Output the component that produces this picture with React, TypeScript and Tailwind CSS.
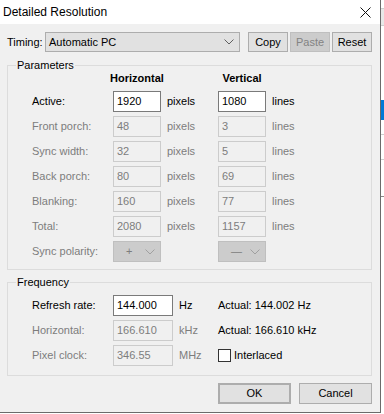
import React from "react";

const font = { fontFamily: '"Liberation Sans", Arial, sans-serif' };

const Chevron: React.FC<{ color?: string }> = ({ color = "#606060" }) => (
  <svg width="10" height="6" viewBox="0 0 10 6" className="shrink-0">
    <path d="M0.5 0.5 L5 5 L9.5 0.5" fill="none" stroke={color} strokeWidth="1" />
  </svg>
);

type Row = { label: string; h: string; v: string; enabled?: boolean };

const rows: Row[] = [
  { label: "Active:", h: "1920", v: "1080", enabled: true },
  { label: "Front porch:", h: "48", v: "3" },
  { label: "Sync width:", h: "32", v: "5" },
  { label: "Back porch:", h: "80", v: "69" },
  { label: "Blanking:", h: "160", v: "77" },
  { label: "Total:", h: "2080", v: "1157" },
];

const Field: React.FC<{ value: string; enabled?: boolean; w: string }> = ({
  value,
  enabled,
  w,
}) => (
  <div
    className={`${w} h-[21px] shrink-0 flex items-center pl-[3px] border ${
      enabled
        ? "bg-white border-[#7a7a7a] text-black"
        : "bg-[#f0f0f0] border-[#cccccc] text-[#7d7d7d]"
    }`}
  >
    {value}
  </div>
);

const PolarityBox: React.FC<{ sign: string }> = ({ sign }) => (
  <div className="w-[48px] h-[21px] shrink-0 flex items-center justify-between pl-[12px] pr-[5px] bg-[#cccccc] border border-[#bfbfbf] text-[#7d7d7d]">
    <span>{sign}</span>
    <Chevron color="#a0a0a0" />
  </div>
);

const Button: React.FC<{
  children: React.ReactNode;
  className?: string;
  disabled?: boolean;
}> = ({ children, className = "", disabled }) => (
  <div
    className={`flex items-center justify-center border ${
      disabled
        ? "bg-[#cccccc] border-[#bfbfbf] text-[#838383]"
        : "bg-[#e1e1e1] border-[#adadad] text-black"
    } ${className}`}
  >
    {children}
  </div>
);

export default function App() {
  return (
    <div className="w-[384px] h-[414px] bg-white flex items-start overflow-hidden" style={font}>
      <div className="w-[381px] h-[413px] shrink-0 bg-[#f0f0f0] border-r border-b border-[#6b6b6b] flex flex-col text-[11px] leading-[13px] text-black">
        {/* title bar */}
        <div className="h-[24px] bg-white flex items-center justify-between pl-[3px] pr-[9px]">
          <span className="text-[12px] text-black">Detailed Resolution</span>
          <svg width="11" height="11" viewBox="0 0 11 11">
            <path d="M0.5 0.5 L10.5 10.5 M10.5 0.5 L0.5 10.5" stroke="#111" strokeWidth="1" />
          </svg>
        </div>

        <div className="flex flex-col pl-[7px] pr-[8px]">
          {/* timing row */}
          <div className="flex items-center mt-[8px] h-[20px]">
            <span className="w-[38px] shrink-0">Timing:</span>
            <div className="w-[195px] h-[20px] flex items-center justify-between pl-[3px] pr-[5px] bg-[#e1e1e1] border border-[#adadad]">
              <span>Automatic PC</span>
              <Chevron />
            </div>
            <Button className="w-[40px] h-[20px] ml-[8px]">Copy</Button>
            <Button className="w-[40px] h-[20px] ml-[2px]" disabled>
              Paste
            </Button>
            <Button className="w-[40px] h-[20px] ml-[2px]">Reset</Button>
          </div>

          {/* parameters */}
          <fieldset className="mt-[7px] border border-[#dcdcdc] pb-[7px]">
            <legend className="ml-[8px] px-[1px]">Parameters</legend>
            <div className="pl-[24px]">
              <div className="flex font-bold">
                <div className="w-[81px] shrink-0" />
                <div className="w-[48px] shrink-0 flex justify-center whitespace-nowrap">Horizontal</div>
                <div className="w-[57px] shrink-0" />
                <div className="w-[48px] shrink-0 flex justify-center whitespace-nowrap">Vertical</div>
              </div>
              <div className="flex flex-col gap-[4px] mt-[6px]">
                {rows.map((r) => (
                  <div key={r.label} className="flex items-center">
                    <span className={`w-[81px] shrink-0 ${r.enabled ? "text-black" : "text-[#7d7d7d]"}`}>
                      {r.label}
                    </span>
                    <Field value={r.h} enabled={r.enabled} w="w-[48px]" />
                    <span className={`w-[51px] ml-[6px] shrink-0 ${r.enabled ? "text-black" : "text-[#7d7d7d]"}`}>
                      pixels
                    </span>
                    <Field value={r.v} enabled={r.enabled} w="w-[48px]" />
                    <span className={`ml-[6px] ${r.enabled ? "text-black" : "text-[#7d7d7d]"}`}>lines</span>
                  </div>
                ))}
                <div className="flex items-center">
                  <span className="w-[81px] shrink-0 text-[#7d7d7d]">Sync polarity:</span>
                  <PolarityBox sign="+" />
                  <div className="w-[57px] shrink-0" />
                  <PolarityBox sign="—" />
                </div>
              </div>
            </div>
          </fieldset>

          {/* frequency */}
          <fieldset className="mt-[6px] border border-[#dcdcdc] pt-[6px] pb-[9px]">
            <legend className="ml-[8px] px-[1px]">Frequency</legend>
            <div className="flex flex-col gap-[4px] pl-[24px]">
              <div className="flex items-center">
                <span className="w-[81px] shrink-0">Refresh rate:</span>
                <Field value="144.000" enabled w="w-[60px]" />
                <span className="w-[39px] ml-[6px] shrink-0">Hz</span>
                <span>Actual: 144.002 Hz</span>
              </div>
              <div className="flex items-center">
                <span className="w-[81px] shrink-0 text-[#7d7d7d]">Horizontal:</span>
                <Field value="166.610" w="w-[60px]" />
                <span className="w-[39px] ml-[6px] shrink-0 text-[#7d7d7d]">kHz</span>
                <span>Actual: 166.610 kHz</span>
              </div>
              <div className="flex items-center">
                <span className="w-[81px] shrink-0 text-[#7d7d7d]">Pixel clock:</span>
                <Field value="346.55" w="w-[60px]" />
                <span className="w-[39px] ml-[6px] shrink-0 text-[#7d7d7d]">MHz</span>
                <div className="w-[13px] h-[13px] bg-white border border-[#333333] shrink-0" />
                <span className="ml-[3px]">Interlaced</span>
              </div>
            </div>
          </fieldset>

          {/* buttons */}
          <div className="flex justify-end gap-[8px] mt-[7px]">
            <Button className="w-[73px] h-[21px] border-2 border-[#0078d7]">OK</Button>
            <Button className="w-[73px] h-[21px]">Cancel</Button>
          </div>
        </div>
      </div>

      {/* background app strip */}
      <div className="flex-1 h-full flex flex-col bg-white">
        <div className="h-[8px]" />
        <div className="h-[18px] bg-[#e8e8e8] border-y border-[#cfcfcf]" />
        <div className="h-[74px]" />
        <div className="h-[20px] bg-[#0078d7]" />
        <div className="h-[15px] border-b border-[#cfcfcf]" />
        <div className="h-[25px] border-b border-[#cfcfcf]" />
        <div className="h-[37px] border-b border-[#8a8a8a]" />
      </div>
    </div>
  );
}
